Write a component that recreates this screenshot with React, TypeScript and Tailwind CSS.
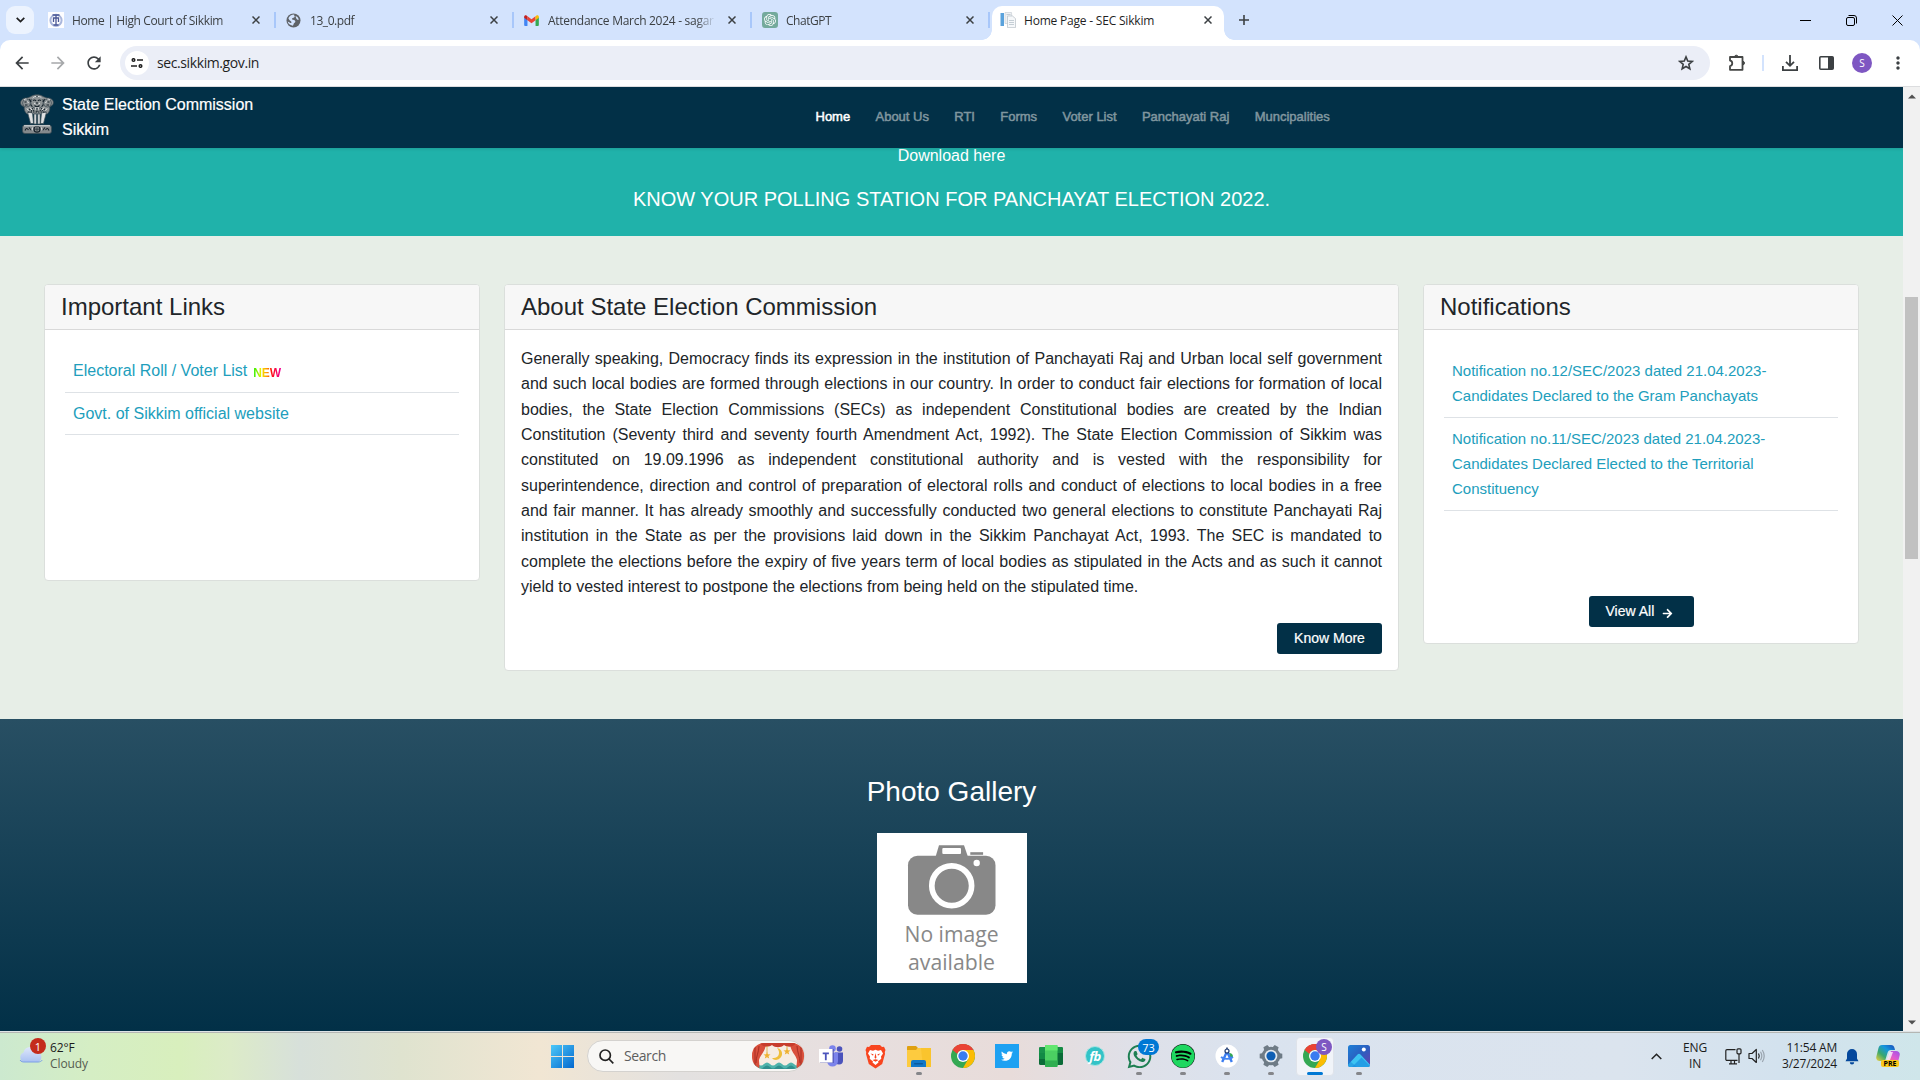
import React from "react";
import { FaSpotify, FaTwitter, FaWhatsapp, FaArrowRight } from "react-icons/fa";
import { MdArrowBack, MdArrowForward, MdMoreVert, MdRefresh } from "react-icons/md";
import { SiOpenai } from "react-icons/si";

/* ---------- Small drawings ---------- */

function CloseGlyph() {
  return (
    <svg width="8" height="8" viewBox="0 0 8 8" fill="none" stroke="#3c4043" strokeWidth="1.5">
      <path d="M0.5 0.5l7 7M7.5 0.5l-7 7" />
    </svg>
  );
}

function CourtIcon() {
  return (
    <svg width="16" height="16" viewBox="0 0 16 16">
      <rect width="16" height="16" fill="#fdfdff" />
      <circle cx="8" cy="8.3" r="5.6" fill="none" stroke="#a9b6dc" strokeWidth="2" />
      <path d="M4.5 3h7M8 2.5v10M5 6h6M5.500 6v4M10.500 6v4M5.5 13h5" stroke="#4a5795" strokeWidth="1.3" />
    </svg>
  );
}

function GlobeIcon() {
  return (
    <svg width="15" height="15" viewBox="0 0 15 15">
      <circle cx="7.5" cy="7.5" r="7" fill="#5f6368" />
      <path d="M8.2 1.5c-.4 1.5 1 1.6.4 2.6C8 5.200 6 4.800 5.900 6.100c0 1.100 2 .7 3 1.500.9.8.3 2.100-.6 2.400-.9.400-.5 2-1.500 2.700C4 12 2 10.400 1.700 8.400L4.500 10c.9.300 1.300-.9.600-1.500C4 7.600 3 7 2.400 5.300 3.300 3 5.500 1.500 8.200 1.500z" fill="#d3e3fd" />
      <path d="M9.5 3c1.600.3 3 2 3.300 3.600-1 .6-2.400-.3-2.600-1.400z" fill="#d3e3fd" />
    </svg>
  );
}

function GmailIcon() {
  return (
    <svg width="15" height="11" viewBox="0 0 16 12">
      <path d="M0 2.200V11a1 1 0 001 1h2.600V4.500z" fill="#4285f4" />
      <path d="M16 2.200V11a1 1 0 01-1 1h-2.600V4.500z" fill="#34a853" />
      <path d="M3.600 1.300v4.400L8 9l4.400-3.300V1.300L8 4.600z" fill="#ea4335" />
      <path d="M0 1.900v1.200l3.600 2.700V1.400l-.8-.6C1.600-.1 0 .6 0 1.900z" fill="#c5221f" />
      <path d="M16 1.900v1.200l-3.600 2.700V1.400l.8-.6c1.200-.9 2.800-.2 2.800 1.100z" fill="#fbbc04" />
    </svg>
  );
}

function PageIcon() {
  return (
    <svg width="16" height="16" viewBox="0 0 16 16">
      <rect x="0.500" y="1" width="3.500" height="13" fill="#5aa2dc" />
      <path d="M5 .5h6.500l.5 11H5z" fill="#eef1f4" stroke="#c3cad1" strokeWidth=".6" />
      <path d="M7.500 4h5l3 2.600V15.600h-8z" fill="#f6f8fa" stroke="#b6bec6" strokeWidth=".7" />
      <path d="M9 8.500h5M9 10.500h5M9 12.500h5M6.500 2.500h4" stroke="#c0c8d0" strokeWidth=".9" />
    </svg>
  );
}

function StarIcon() {
  return (
    <svg width="16" height="16" viewBox="0 0 16 16" className="ml-auto" fill="none" stroke="#3c4043" strokeWidth="1.600">
      <path d="M8 1.900l1.750 4.150 4.450.4-3.400 2.950 1.050 4.400L8 11.500l-3.850 2.300 1.050-4.400L1.800 6.450l4.450-.4z" />
    </svg>
  );
}

function Emblem() {
  return (
    <svg width="34" height="42" viewBox="0 0 34 42">
      <g fill="#8d9395" stroke="#3b4a53" strokeWidth=".7">
        <path d="M11 2.500c2-2.200 10-2.200 12 0l4 1.500c4-.6 7 2.500 6.300 5.300-.2 2-2.300 3-3.600 3.400.6 3.300-.6 5.300-2.400 7.300H7C5 18 3.800 16 4.300 12.700 2.500 12.200.5 11 .6 9 .5 6 3.500 3.600 7 4z" />
        <circle cx="17" cy="8.500" r="6.200" />
        <circle cx="6.500" cy="9" r="4" />
        <circle cx="27.500" cy="9" r="4" />
        <path d="M7.500 18l3 11.500h3L12.500 19zM26.500 18l-3 11.500h-3l1-10.500zM14 20v10h2.400V20zM17.700 20v10h2.400V20z" fill="#dfe1e2" />
        <rect x="2.500" y="31" width="29" height="8.500" rx="2.500" fill="#84898c" />
      </g>
      <g fill="none" stroke="#15212a" strokeWidth="1.100">
        <path d="M13 6.500c1.500-1 2.500-.5 3 .5M21 6.500c-1.500-1-2.500-.5-3 .5M14.500 11.500c1.500 1.500 3.500 1.500 5 0M17 8v2" />
        <path d="M4.500 8h2M5 11h2.500M29.500 8h-2M29 11h-2.500M9.500 5l1.500 3M24.500 5L23 8M10.500 10.500l1.500 2M23.500 10.500l-1.500 2" />
        <path d="M9 15l3 2M12 14l2 3M25 15l-3 2M22 14l-2 3M17 14v4M8 18h18" strokeDasharray="1.500 1" />
        <circle cx="17" cy="35.200" r="3" />
        <path d="M14 35.200h6M17 32.200v6" strokeWidth=".6" />
        <path d="M5 36.500c1-2.500 2-2.500 3.500-.5M9 33.500l2.500 3M29 36.500c-1-2.500-2-2.500-3.500-.5M25 33.500l-2.500 3" />
      </g>
      <g stroke="#f4f5f5" strokeWidth=".9" fill="none">
        <path d="M12.500 4.500c1-1.500 2-2 3.500-2M18 2.500c2 0 3 .7 3.800 2M4 6c.7-.8 1.500-1 2.500-1M10 13.500l2 2.500M24 13.500l-2 2.500M16 13l-.5 2.500M18 13l.5 2.500M4 31.800h26M27.500 5c1 0 2 .5 2.500 1M14 9l1.500 1M20 9l-1.500 1M7.500 7.500l1 1.500M26.500 7.500l-1 1.500M7 14.500l1.500 2M27 14.500l-1.500 2M12.500 33.500l-.5 3M21.500 33.500l.5 3" />
      </g>
    </svg>
  );
}

function Camera() {
  return (
    <svg width="150" height="150" viewBox="0 0 150 150" className="block">
      <rect width="150" height="150" fill="#fff" />
      <g fill="#888">
        <rect x="31" y="22.700" width="87.500" height="59" rx="9.500" />
        <path d="M58.500 24L62 12.300h25L91 24z" />
        <rect x="93.300" y="19.200" width="12.800" height="2.600" />
      </g>
      <rect x="65.300" y="15" width="18.700" height="6" rx="1" fill="#fff" />
      <circle cx="99.700" cy="30" r="3.200" fill="#fff" />
      <circle cx="74.700" cy="52.700" r="19.900" fill="#888" stroke="#fff" strokeWidth="5.700" />
      <g fill="#888" fontSize="22" textAnchor="middle" className="font-['Open_Sans',sans-serif]">
        <text x="74.500" y="108.500" textLength="94" lengthAdjust="spacingAndGlyphs">No image</text>
        <text x="74.500" y="136.500" textLength="87" lengthAdjust="spacingAndGlyphs">available</text>
      </g>
    </svg>
  );
}

function ChromeLogo() {
  return (
    <svg width="24" height="24" viewBox="0 0 24 24">
      <circle cx="12" cy="12" r="12" fill="#34a853" />
      <path d="M12 12L1.610 6A12 12 0 0122.390 6z" fill="#ea4335" />
      <path d="M12 6h10.390A12 12 0 0112 24l5.200-9z" fill="#fbbc04" />
      <path d="M1.610 6L6.800 15 12 12V6z" fill="#34a853" />
      <path d="M1.610 6A12 12 0 0122.390 6H12a6 6 0 00-5.600 4z" fill="#ea4335" />
      <circle cx="12" cy="12" r="6" fill="#fff" />
      <circle cx="12" cy="12" r="4.700" fill="#3a7cf0" />
    </svg>
  );
}

function WindowsLogo() {
  return (
    <svg width="23" height="23" viewBox="0 0 23 23">
      <defs>
        <linearGradient id="win" x1="0" y1="0" x2="23" y2="23" gradientUnits="userSpaceOnUse">
          <stop offset="0" stopColor="#4cc8f8" />
          <stop offset="1" stopColor="#0468cf" />
        </linearGradient>
      </defs>
      <path d="M0 0h11v11H0zM12 0h11v11H12zM0 12h11v11H0zM12 12h11v11H12z" fill="url(#win)" />
    </svg>
  );
}

function TheatreArt() {
  return (
    <svg width="52" height="26" viewBox="0 0 52 26">
      <defs>
        <clipPath id="pill"><rect width="52" height="26" rx="12" /></clipPath>
      </defs>
      <g clipPath="url(#pill)">
        <rect width="52" height="26" fill="#f6ece2" />
        <path d="M0 21q3-3 6 0t6 0 6 0 6 0 6 0 6 0 6 0 6 0 6 0v6H0z" fill="#4fb3ab" />
        <path d="M0 24q3-3 6 0t6 0 6 0 6 0 6 0 6 0 6 0 6 0 6 0v3H0z" fill="#2f8f8d" />
        <path d="M0 0h14C14 8 8 12 7 17c0 4 1 6 0 9H0zM52 0H38c0 8 6 12 7 17 0 4-1 6 0 9h7z" fill="#d9503c" />
        <path d="M8 0h36c-3 5-9 4-12 2-3 3-9 3-12 0-3 2-9 3-12-2z" fill="#c73d2d" />
        <path d="M3 4v20M7 3C7 9 4 13 4 20M49 4v20M45 3c0 6 3 10 3 17" stroke="#a92f24" strokeWidth="1" fill="none" />
        <path d="M25 5c7 1 7 11-1 12-2 0-3-1-4-2 7 1 9-6 5-10z" fill="#efbe3a" />
        <path d="M15 3v7M35 3v3" stroke="#d8a93a" strokeWidth=".8" />
        <path d="M15 9l1 2.300 2.500.2-2 1.600.7 2.400L15 14.200l-2.200 1.300.7-2.400-2-1.600 2.500-.2zM35 5l1 2.300 2.500.2-2 1.600.7 2.400L35 10.200l-2.200 1.300.7-2.400-2-1.600 2.500-.2z" fill="#efb233" />
      </g>
    </svg>
  );
}

function TeamsLogo() {
  return (
    <svg width="24" height="22" viewBox="0 0 24 22">
      <circle cx="20.500" cy="4" r="2.800" fill="#4b53bc" />
      <circle cx="13.500" cy="3.500" r="3.300" fill="#7b83eb" />
      <path d="M16 7.500h8v8a4 4 0 01-8 0z" fill="#4b53bc" />
      <path d="M8 7.500h11v8.500a5.500 5.500 0 01-11 0z" fill="#7b83eb" />
      <rect x="1" y="4" width="14" height="14" fill="#4449a8" opacity=".6" />
      <rect x="0" y="4" width="13.500" height="13.500" fill="#fff" />
      <path d="M3.700 7.500h6.200v1.800H7.700v6H5.900v-6H3.700z" fill="#4b53bc" />
    </svg>
  );
}

function BraveLogo() {
  return (
    <svg width="21" height="25" viewBox="0 0 21 25">
      <path d="M6 1h9l2 2 2-.3L20.500 6l-.7 2 .2 2-2.800 10-6.700 4.500L3.800 20 1 10l.2-2L.5 6 2 2.700 4 3z" fill="#f8451f" />
      <path d="M5 6l3 .7 2.500-1 2.500 1 3-.7 2 3.500-2 3 .3 2.300-3.300 2.700 .5 1-3 2.500-3-2.500 .5-1-3.300-2.700L5 12.500 3 9.500z" fill="#fff" />
      <path d="M5.500 9.500l3 .8-.5 1.500zM15.500 9.500l-3 .8.5 1.500zM10.500 9l-1 4.500 1 1.200 1-1.200zM7.500 16l3-.7 3 .7-3 1.700z" fill="#f8451f" />
    </svg>
  );
}

function ExplorerLogo() {
  return (
    <svg width="24" height="21" viewBox="0 0 24 21">
      <path d="M0 1a1 1 0 011-1h8l2 2-2 3H0z" fill="#e0a010" />
      <path d="M0 4h9l2-2h13v19H0z" fill="#fdcb3f" />
      <path d="M14 2h10v19h-8z" fill="#f9bf22" opacity=".6" />
      <path d="M4 21v-5a2 2 0 012-2h11a2 2 0 012 2v5z" fill="#1278c8" />
      <rect x="7" y="17" width="9" height="1.500" rx=".7" fill="#0b5a9e" />
    </svg>
  );
}

function GreenGridLogo() {
  return (
    <svg width="24" height="22" viewBox="0 0 24 22">
      <rect x="0" y="2" width="24" height="18" rx="1.500" fill="#0b6b37" />
      <path d="M0 8h6v6H0z" fill="#118a45" />
      <path d="M0 3.500A1.500 1.500 0 011.500 2H6v6H0z" fill="#17924a" />
      <path d="M18 2h4.500A1.500 1.500 0 0124 3.500V8h-6z" fill="#168c43" />
      <rect x="6" y="0" width="12.500" height="22" rx="1" fill="#4bcf62" />
      <path d="M6 5.500V1a1 1 0 011-1h10.500a1 1 0 011 1v4.500z" fill="#62e66f" />
      <path d="M6 15.500h12.500V21a1 1 0 01-1 1H7a1 1 0 01-1-1z" fill="#2fae50" />
    </svg>
  );
}

function StudioLogo() {
  return (
    <svg width="24" height="24" viewBox="0 0 24 24">
      <circle cx="12" cy="12" r="11.500" fill="#fff" />
      <path d="M14 9a4 4 0 014 4h-3z" fill="#34a853" />
      <path d="M12 7.500L7.200 18M12 7.500L16.800 18" stroke="#3b7df0" strokeWidth="2.400" fill="none" />
      <path d="M6 13c3 2.600 9 2.600 12 0" stroke="#4285f4" strokeWidth="1.800" fill="none" />
      <circle cx="12" cy="7" r="2" fill="#fff" stroke="#1d3a70" strokeWidth="1.200" />
      <path d="M12 3.500v2" stroke="#1d3a70" strokeWidth="1.500" />
    </svg>
  );
}

const gearTeeth = [0, 60, 120, 180, 240, 300];

function SettingsLogo() {
  return (
    <svg width="24" height="24" viewBox="0 0 24 24">
      <g fill="#6e7b86">
        <circle cx="12" cy="12" r="9.300" />
        {gearTeeth.map((a) => (
          <path key={a} d="M8.800 5l.9-4.300h4.600l.9 4.300z" transform={`rotate(${a + 30} 12 12)`} />
        ))}
      </g>
      <circle cx="12" cy="12" r="6.300" fill="#e3e9ef" />
      <circle cx="12" cy="12" r="4.600" fill="#0f5fb4" />
    </svg>
  );
}

function PhotosLogo() {
  return (
    <svg width="22" height="22" viewBox="0 0 22 22">
      <defs>
        <linearGradient id="ph" x1="0" y1="0" x2="1" y2="1">
          <stop offset="0" stopColor="#1e7fd6" />
          <stop offset=".5" stopColor="#2b5fc0" />
          <stop offset="1" stopColor="#6a3fae" />
        </linearGradient>
        <clipPath id="phc"><rect width="22" height="22" rx="2.500" /></clipPath>
      </defs>
      <g clipPath="url(#phc)">
        <rect width="22" height="22" fill="url(#ph)" />
        <path d="M-2 22L9.500 9.500a2 2 0 013 0L24 22z" fill="#3cc3f2" />
        <path d="M9 22L-1 14l-2 8z" fill="#1583d8" opacity=".5" />
        <path d="M4 22l9.500-9.500L23 22z" fill="#1a8fe0" opacity=".7" />
      </g>
      <circle cx="15.800" cy="4.500" r="2" fill="#fff" />
    </svg>
  );
}

function CopilotLogo() {
  return (
    <svg width="24" height="24" viewBox="0 0 24 24">
      <defs>
        <linearGradient id="cpa" x1="0" y1="1" x2="1" y2="0">
          <stop offset="0" stopColor="#f4d13a" />
          <stop offset=".35" stopColor="#3aa76d" />
          <stop offset=".65" stopColor="#1597dd" />
          <stop offset="1" stopColor="#1b49b8" />
        </linearGradient>
        <linearGradient id="cpb" x1="0" y1="1" x2="1" y2="0">
          <stop offset="0" stopColor="#ff7a59" />
          <stop offset=".5" stopColor="#e15ad0" />
          <stop offset="1" stopColor="#9a56e8" />
        </linearGradient>
      </defs>
      <path d="M6 1h9c2 0 3 1 3.500 3L19 6h-4c-2 0-3 1-3.500 3L9 17H4c-3 0-4.500-2-3.500-5l2-8C3 2 4 1 6 1z" fill="url(#cpa)" />
      <path d="M15 7h5c3 0 4.500 2 3.500 5l-1.500 6H9l2-1z" fill="url(#cpb)" />
      <path d="M14 8h3l-3 8h-3z" fill="#fff" opacity=".75" />
    </svg>
  );
}

/* ---------- Browser chrome ---------- */

const tabs = [
  { title: "Home | High Court of Sikkim", icon: <CourtIcon />, gap: "gap-2", track: "tracking-[-0.36px]" },
  { title: "13_0.pdf", icon: <GlobeIcon />, gap: "gap-[9px]", track: "tracking-[-0.45px]" },
  { title: "Attendance March 2024 - sagar", icon: <GmailIcon />, gap: "gap-[9px]", track: "tracking-[-0.28px]" },
  {
    title: "ChatGPT",
    icon: (
      <span className="flex size-4 items-center justify-center rounded-[3px] bg-[#74aa9c]">
        <SiOpenai size={12} color="#fff" />
      </span>
    ),
    gap: "gap-2",
    track: "tracking-[-0.45px]",
  },
];

function TabStrip() {
  return (
    <div className="flex h-10 bg-[#d3e3fd] text-xs leading-4 text-[#3c4043]">
      <div className="mt-1.5 ml-1.5 flex h-7 w-7 items-center justify-center rounded-[9px] bg-[#ecf3fe]">
        <svg width="9" height="6" viewBox="0 0 9 6" fill="none" stroke="#1f1f1f" strokeWidth="1.700">
          <path d="M.7.8l3.800 3.700L8.300.8" />
        </svg>
      </div>
      <div className="ml-1 flex">
        {tabs.map((t) => (
          <div key={t.title} className={`flex w-[238px] items-center pl-[10px] ${t.gap}`}>
            <span className="shrink-0">{t.icon}</span>
            <span
              className={`w-[170px] overflow-hidden pt-0.5 whitespace-nowrap [mask-image:linear-gradient(to_right,black_148px,transparent_168px)] ${t.track}`}
            >
              {t.title}
            </span>
            <span className="ml-auto flex items-center gap-[14px]">
              <CloseGlyph />
              <span className="h-4 w-0.5 bg-[#a8c7fa]" />
            </span>
          </div>
        ))}
      </div>
      <div className="relative ml-0.5 mt-1.5 flex h-[34px] w-[232px] items-center rounded-t-[10px] bg-white pl-2 pr-[12px] pb-1.5 text-[#1f1f1f]">
        <span className="absolute bottom-0 -left-2.5 size-2.5 bg-[radial-gradient(circle_at_0_0,#d3e3fd_9.500px,white_10px)]" />
        <span className="absolute bottom-0 -right-2.5 size-2.5 bg-[radial-gradient(circle_at_100%_0,#d3e3fd_9.500px,white_10px)]" />
        <PageIcon />
        <span className="ml-2 pt-0.5 tracking-[-0.2px]">Home Page - SEC Sikkim</span>
        <span className="ml-auto">
          <CloseGlyph />
        </span>
      </div>
      <svg className="ml-[15px] self-center" width="10" height="10" viewBox="0 0 10 10" stroke="#3c4043" strokeWidth="1.600">
        <path d="M5 0v10M0 5h10" />
      </svg>
      <div className="ml-auto flex items-center gap-[35px] pr-[17px]">
        <svg width="11" height="11" viewBox="0 0 11 11" stroke="#000" strokeWidth="1">
          <path d="M0 5.500h11" />
        </svg>
        <svg width="11" height="11" viewBox="0 0 11 11" fill="none" stroke="#000" strokeWidth="1">
          <rect x=".5" y="2.500" width="8" height="8" rx="1.500" />
          <path d="M2.500.5h5.500a2.500 2.500 0 012.500 2.500v5.500" />
        </svg>
        <svg width="11" height="11" viewBox="0 0 11 11" stroke="#000" strokeWidth="1">
          <path d="M.5.5l10 10M10.500.5l-10 10" />
        </svg>
      </div>
    </div>
  );
}

function Toolbar() {
  return (
    <div className="bg-[#d3e3fd]">
      <div className="flex h-[47px] items-center rounded-t-[10px] border-b border-[#dcdddf] bg-white pl-3 text-[#3c4043]">
        <MdArrowBack size={20} />
        <MdArrowForward size={20} color="#a6a8aa" className="ml-4" />
        <MdRefresh size={20} className="ml-4" />
        <div className="ml-[16px] flex h-[34px] w-[1590px] items-center rounded-full bg-[#ebeef7] pl-[5px] pr-4">
          <span className="flex size-6 items-center justify-center rounded-full bg-white">
            <svg width="12" height="10" viewBox="0 0 12 10" fill="none" stroke="#1f1f1f" strokeWidth="1.500">
              <circle cx="2.500" cy="2" r="1.300" />
              <path d="M6 2h6M0 8h6" />
              <circle cx="9.500" cy="8" r="1.300" />
            </svg>
          </span>
          <span className="ml-2 text-sm leading-5 tracking-[-0.4px] text-[#1f1f1f]">sec.sikkim.gov.in</span>
          <StarIcon />
        </div>
        <svg className="ml-[18px]" width="17" height="18" viewBox="0 0 17 18" fill="none" stroke="#454746" strokeWidth="1.800">
          <path d="M2 3h12.500v12.800H2v-3.600c3-.4 3-5.300 0-5.700z" strokeLinejoin="round" />
          <path d="M6.500 2.500a1.900 1.900 0 013.600 0zM15 7.200a1.900 1.900 0 010 3.700z" fill="#454746" strokeWidth="1" />
        </svg>
        <span className="ml-[17px] h-4 w-0.5 bg-[#d3e3fd]" />
        <svg className="ml-[18px]" width="16" height="16" viewBox="0 0 16 16" fill="none" stroke="#3c4043" strokeWidth="1.800">
          <path d="M8 0v10.500M4 6.800l4 4 4-4M.9 11v4.100h14.200V11" />
        </svg>
        <svg className="ml-[21px]" width="15" height="14" viewBox="0 0 15 14">
          <rect x=".8" y=".8" width="13.400" height="12.400" rx="1" fill="none" stroke="#3c4043" strokeWidth="1.600" />
          <path d="M9 1h5v12H9z" fill="#3c4043" />
        </svg>
        <span className="ml-[18px] flex size-5 items-center justify-center rounded-full bg-[#7e57c2] text-[10px] text-white">S</span>
        <MdMoreVert size={20} className="ml-[16px]" />
      </div>
    </div>
  );
}

/* ---------- Web page ---------- */

const navItems = ["About Us", "RTI", "Forms", "Voter List", "Panchayati Raj", "Muncipalities"];

function SiteHeader() {
  return (
    <header className="relative z-10 flex h-[61px] bg-[#023047] text-white shadow-[0_1px_3px_rgba(0,0,0,0.12)]">
      <div className="mt-[7px] ml-5">
        <Emblem />
      </div>
      <div className="mt-[5px] ml-2 w-[745px] text-base leading-[25px] [-webkit-text-stroke:0.2px]">
        <div>State Election Commission</div>
        <div>Sikkim</div>
      </div>
      <nav className="mt-[22px] ml-[8.500px] flex gap-[25.300px] text-[13px] leading-4 text-[#80969f] [-webkit-text-stroke:0.5px]">
        <span className="text-white">Home</span>
        {navItems.map((n) => (
          <span key={n}>{n}</span>
        ))}
      </nav>
    </header>
  );
}

function Card({ title, className, children }: { title: string; className: string; children: React.ReactNode }) {
  return (
    <section className={`flex flex-col rounded-[4px] border border-[#dbdfdc] bg-white ${className}`}>
      <h2 className="h-[45px] shrink-0 rounded-t-[3px] border-b border-[#d9d9d9] bg-[#f7f7f7] pl-4 text-2xl leading-[44px] text-[#212529]">
        {title}
      </h2>
      {children}
    </section>
  );
}

const aboutText =
  "Generally speaking, Democracy finds its expression in the institution of Panchayati Raj and Urban local self government and such local bodies are formed through elections in our country. In order to conduct fair elections for formation of local bodies, the State Election Commissions (SECs) as independent Constitutional bodies are created by the Indian Constitution (Seventy third and seventy fourth Amendment Act, 1992). The State Election Commission of Sikkim was constituted on 19.09.1996 as independent constitutional authority and is vested with the responsibility for superintendence, direction and control of preparation of electoral rolls and conduct of elections to local bodies in a free and fair manner. It has already smoothly and successfully conducted two general elections to constitute Panchayati Raj institution in the State as per the provisions laid down in the Sikkim Panchayat Act, 1993. The SEC is mandated to complete the elections before the expiry of five years term of local bodies as stipulated in the Acts and as such it cannot yield to vested interest to postpone the elections from being held on the stipulated time.";

function WebPage() {
  return (
    <main className="w-[1903px] overflow-hidden bg-[#e7eee7] font-['Liberation_Sans',Arial,sans-serif]">
      <SiteHeader />
      <div className="flow-root h-[88px] bg-[#20b2aa] text-center text-white">
        <p className="-mt-1 text-base leading-6">Download here</p>
        <p className="mt-[19px] text-xl leading-6">KNOW YOUR POLLING STATION FOR PANCHAYAT ELECTION 2022.</p>
      </div>

      <div className="flex h-[483px] items-start pt-12 pl-11">
        <Card title="Important Links" className="h-[297px] w-[436px]">
          <ul className="mx-5 mt-5 text-base leading-[25.330px] text-[#219ebc]">
            <li className="flex h-[43px] border-b border-[#dee2e6] px-2 pt-2">
              Electoral Roll / Voter List
              <span className="ml-[6px] mt-[3px] bg-[linear-gradient(to_right,#19f000,#f5f000_30%,#ff8a00_52%,#ff1010_66%,#f0009a)] bg-clip-text text-[12px] font-black tracking-[-0.1px] text-transparent">
                NEW
              </span>
            </li>
            <li className="h-[42px] border-b border-[#dee2e6] px-2 pt-2">Govt. of Sikkim official website</li>
          </ul>
        </Card>

        <Card title="About State Election Commission" className="ml-6 h-[387px] w-[895px]">
          <p className="mx-4 mt-4 text-justify text-base leading-[25.330px] text-[#212529]">{aboutText}</p>
          <button className="mt-auto mr-4 mb-4 h-[31px] w-[105px] self-end rounded-[3px] bg-[#023047] text-sm leading-[31px] text-white [-webkit-text-stroke:0.2px]">
            Know More
          </button>
        </Card>

        <Card title="Notifications" className="ml-6 h-[360px] w-[436px]">
          <ul className="mx-5 mt-5 text-[15px] leading-[25.330px] text-[#219ebc]">
            <li className="border-b border-[#dee2e6] p-2">
              Notification no.12/SEC/2023 dated 21.04.2023-
              <br />
              Candidates Declared to the Gram Panchayats
            </li>
            <li className="border-b border-[#dee2e6] p-2">
              Notification no.11/SEC/2023 dated 21.04.2023-
              <br />
              Candidates Declared Elected to the Territorial
              <br />
              Constituency
            </li>
          </ul>
          <button className="mt-auto mb-4 flex h-[31px] w-[105px] items-center self-center rounded-[3px] bg-[#023047] pb-px pl-[17px] text-sm text-white [-webkit-text-stroke:0.2px]">
            View All
            <FaArrowRight size={11} className="mt-1 ml-2" />
          </button>
        </Card>
      </div>

      <div className="flex h-[312px] flex-col items-center bg-[linear-gradient(to_bottom,#284f63,#023047)] pt-14">
        <h2 className="text-[28px] leading-[34px] text-white">Photo Gallery</h2>
        <div className="mt-6">
          <Camera />
        </div>
      </div>
    </main>
  );
}

function Scrollbar() {
  return (
    <div className="flex w-[17px] flex-col items-center bg-[#f1f1f1]">
      <svg className="mt-[7px]" width="8" height="5" viewBox="0 0 8 5">
        <path d="M0 4.500L4 .5l4 4z" fill="#505050" />
      </svg>
      <div className="mt-[198px] h-[262px] w-[13px] bg-[#c1c1c1]" />
      <svg className="mt-auto mb-[6px]" width="8" height="5" viewBox="0 0 8 5">
        <path d="M0 .5l4 4 4-4z" fill="#505050" />
      </svg>
    </div>
  );
}

/* ---------- Taskbar ---------- */

function AppCell({ children, open }: { children: React.ReactNode; open?: boolean }) {
  return (
    <div className="relative flex h-full w-11 items-center justify-center pb-px">
      {children}
      {open && <span className="absolute bottom-[5px] left-[19px] h-[3px] w-1.5 rounded-full bg-[#85868a]" />}
    </div>
  );
}

function Taskbar() {
  return (
    <footer className="flex h-[49px] border-t border-[#dfe4e6] bg-[linear-gradient(to_right,#cce9cf_0,#d5eec4_90px,#d8efbd_180px,#dcebc8_230px,#d7e0da_300px,#dfe3cf_400px,#f1e6d3_540px,#e3e1e0_680px,#e7dfdf_830px,#e8dcda_1010px,#dfe0e8_1130px,#dae3ef_1250px,#dbe4ee_1620px,#d3e2ee_1780px,#cfe6ea_1920px)]">
      <div className="flex w-full border-t border-[#b4b6b3]">
        <div className="relative flex w-[540px] pl-[18px] pt-3">
          <svg width="26" height="18" viewBox="0 0 26 18" className="mt-px">
            <defs>
              <linearGradient id="cl" x1="0" y1="0" x2="0" y2="1">
                <stop offset="0" stopColor="#dfe7fa" />
                <stop offset="1" stopColor="#a9c1f2" />
              </linearGradient>
            </defs>
            <path d="M6 16a5 5 0 01-.5-9.500A7 7 0 0119 6a5.200 5.200 0 011 10z" fill="url(#cl)" />
            <path d="M2 14c1 1.800 3 2 4 2h14c2 0 3.500-.8 4.300-2" stroke="#7d9fe8" strokeWidth="1" fill="none" />
          </svg>
          <span className="absolute left-[30px] top-[5px] flex size-4 items-center justify-center rounded-full bg-[#c42b1c] text-[11px] leading-none text-white">
            1
          </span>
          <div className="-mt-[5px] ml-[6px] text-xs leading-4 tracking-[-0.1px] text-[#1b1b1b]">
            <div>62°F</div>
            <div className="text-[#555c50]">Cloudy</div>
          </div>
        </div>
        <AppCell>
          <WindowsLogo />
        </AppCell>
        <div className="mt-[7px] mr-1 ml-[3px] flex h-8 w-[218px] items-center rounded-full border border-[#d4d2cf] bg-[#f8f7f5] pl-[11px] pr-0">
          <svg width="15" height="15" viewBox="0 0 15 15" fill="none" stroke="#222" strokeWidth="1.700">
            <circle cx="6.200" cy="6.200" r="5.200" />
            <path d="M10 10l4.300 4.300" />
          </svg>
          <span className="ml-[10px] text-sm leading-5 tracking-[-0.4px] text-[#5e5e5e]">Search</span>
          <span className="ml-auto">
            <TheatreArt />
          </span>
        </div>
        <AppCell>
          <TeamsLogo />
        </AppCell>
        <AppCell>
          <BraveLogo />
        </AppCell>
        <AppCell open>
          <ExplorerLogo />
        </AppCell>
        <AppCell>
          <ChromeLogo />
        </AppCell>
        <AppCell>
          <span className="flex size-6 items-center justify-center bg-[#1da1f2]">
            <FaTwitter size={12} color="#fff" />
          </span>
        </AppCell>
        <AppCell>
          <GreenGridLogo />
        </AppCell>
        <AppCell>
          <span className="flex size-5 items-center justify-center rounded-full border border-[#a8e4e2] bg-[#33c3c7] text-[13px] font-bold italic leading-none tracking-[-0.5px] text-white">
            fb
          </span>
        </AppCell>
        <AppCell open>
          <FaWhatsapp size={27} color="#1d7f52" />
          <span className="absolute left-[21px] top-[6px] flex h-4 w-[21px] items-center justify-center rounded-full bg-[#0078d4] text-[11px] leading-none text-white">
            73
          </span>
        </AppCell>
        <AppCell open>
          <span className="flex size-6 items-center justify-center rounded-full bg-black">
            <FaSpotify size={24} color="#1ed760" className="shrink-0" />
          </span>
        </AppCell>
        <AppCell open>
          <StudioLogo />
        </AppCell>
        <AppCell open>
          <SettingsLogo />
        </AppCell>
        <AppCell>
          <span className="absolute left-[3px] top-1 h-[39px] w-[38px] rounded-[4px] border border-[#dfe3ea] bg-[#f1f4f9]" />
          <span className="relative flex">
            <ChromeLogo />
          </span>
          <span className="absolute left-[23px] top-[6px] flex size-4 items-center justify-center rounded-full bg-[#7e57c2] text-[10px] leading-none text-white">
            S
          </span>
          <span className="absolute bottom-[5px] left-[14px] h-[3px] w-4 rounded-full bg-[#0078d4]" />
        </AppCell>
        <AppCell open>
          <PhotosLogo />
        </AppCell>

        <div className="ml-auto flex text-xs leading-4 text-[#1b1b1b]">
          <svg className="mt-5 mr-[21px]" width="11" height="7" viewBox="0 0 11 7" fill="none" stroke="#222" strokeWidth="1.500">
            <path d="M.7 6l4.800-4.800L10.300 6" />
          </svg>
          <div className="mt-[7px] w-6 text-center tracking-[-0.2px]">
            <div>ENG</div>
            <div>IN</div>
          </div>
          <svg className="mt-[15px] ml-[18px]" width="17" height="17" viewBox="0 0 17 17" fill="none" stroke="#222" strokeWidth="1.200">
            <path d="M10.500 1.600H2A1.200 1.200 0 00.8 2.800v8.400a1.200 1.200 0 001.200 1.200h10.500M4 15.800h8M6 12.500v3M9.500 12.500v3" />
            <rect x="12" y=".8" width="4" height="5" rx="1" />
            <path d="M14 6v9" />
          </svg>
          <svg className="mt-[15px] ml-[6px]" width="17" height="16" viewBox="0 0 17 16" fill="none" stroke="#222" strokeWidth="1.200">
            <path d="M1 5.500h3L8.300 1.500v13L4 10.500H1z" strokeLinejoin="round" />
            <path d="M10.500 5.500q1.500 2.500 0 5" />
            <path d="M12.500 3.800q2.600 4.200 0 8.400M14.300 2q3.800 6 0 12" stroke="#9aa4ae" />
          </svg>
          <div className="mt-[7px] w-[72px] text-right tracking-[-0.2px]">
            <div>11:54 AM</div>
            <div>3/27/2024</div>
          </div>
          <svg className="mt-4 ml-2" width="14" height="16" viewBox="0 0 14 16" fill="#04489c">
            <path d="M7 0a5 5 0 00-5 5v4.500L.5 12.300h13L12 9.500V5a5 5 0 00-5-5zM4.800 13.300a2.200 2.200 0 004.400 0z" />
          </svg>
          <div className="relative mt-[11px] mr-5 ml-[17px] h-6 w-6">
            <CopilotLogo />
            <span className="absolute left-[5px] top-[16px] flex h-[7px] w-[18px] items-center justify-center rounded-[2px] bg-[#fbc81a] text-[7px] font-bold leading-none text-black">
              PRE
            </span>
          </div>
        </div>
      </div>
    </footer>
  );
}

export default function App() {
  return (
    <div className="flex h-[1080px] w-[1920px] flex-col overflow-hidden font-['Open_Sans',sans-serif]">
      <TabStrip />
      <Toolbar />
      <div className="flex h-[944px]">
        <WebPage />
        <Scrollbar />
      </div>
      <Taskbar />
    </div>
  );
}
